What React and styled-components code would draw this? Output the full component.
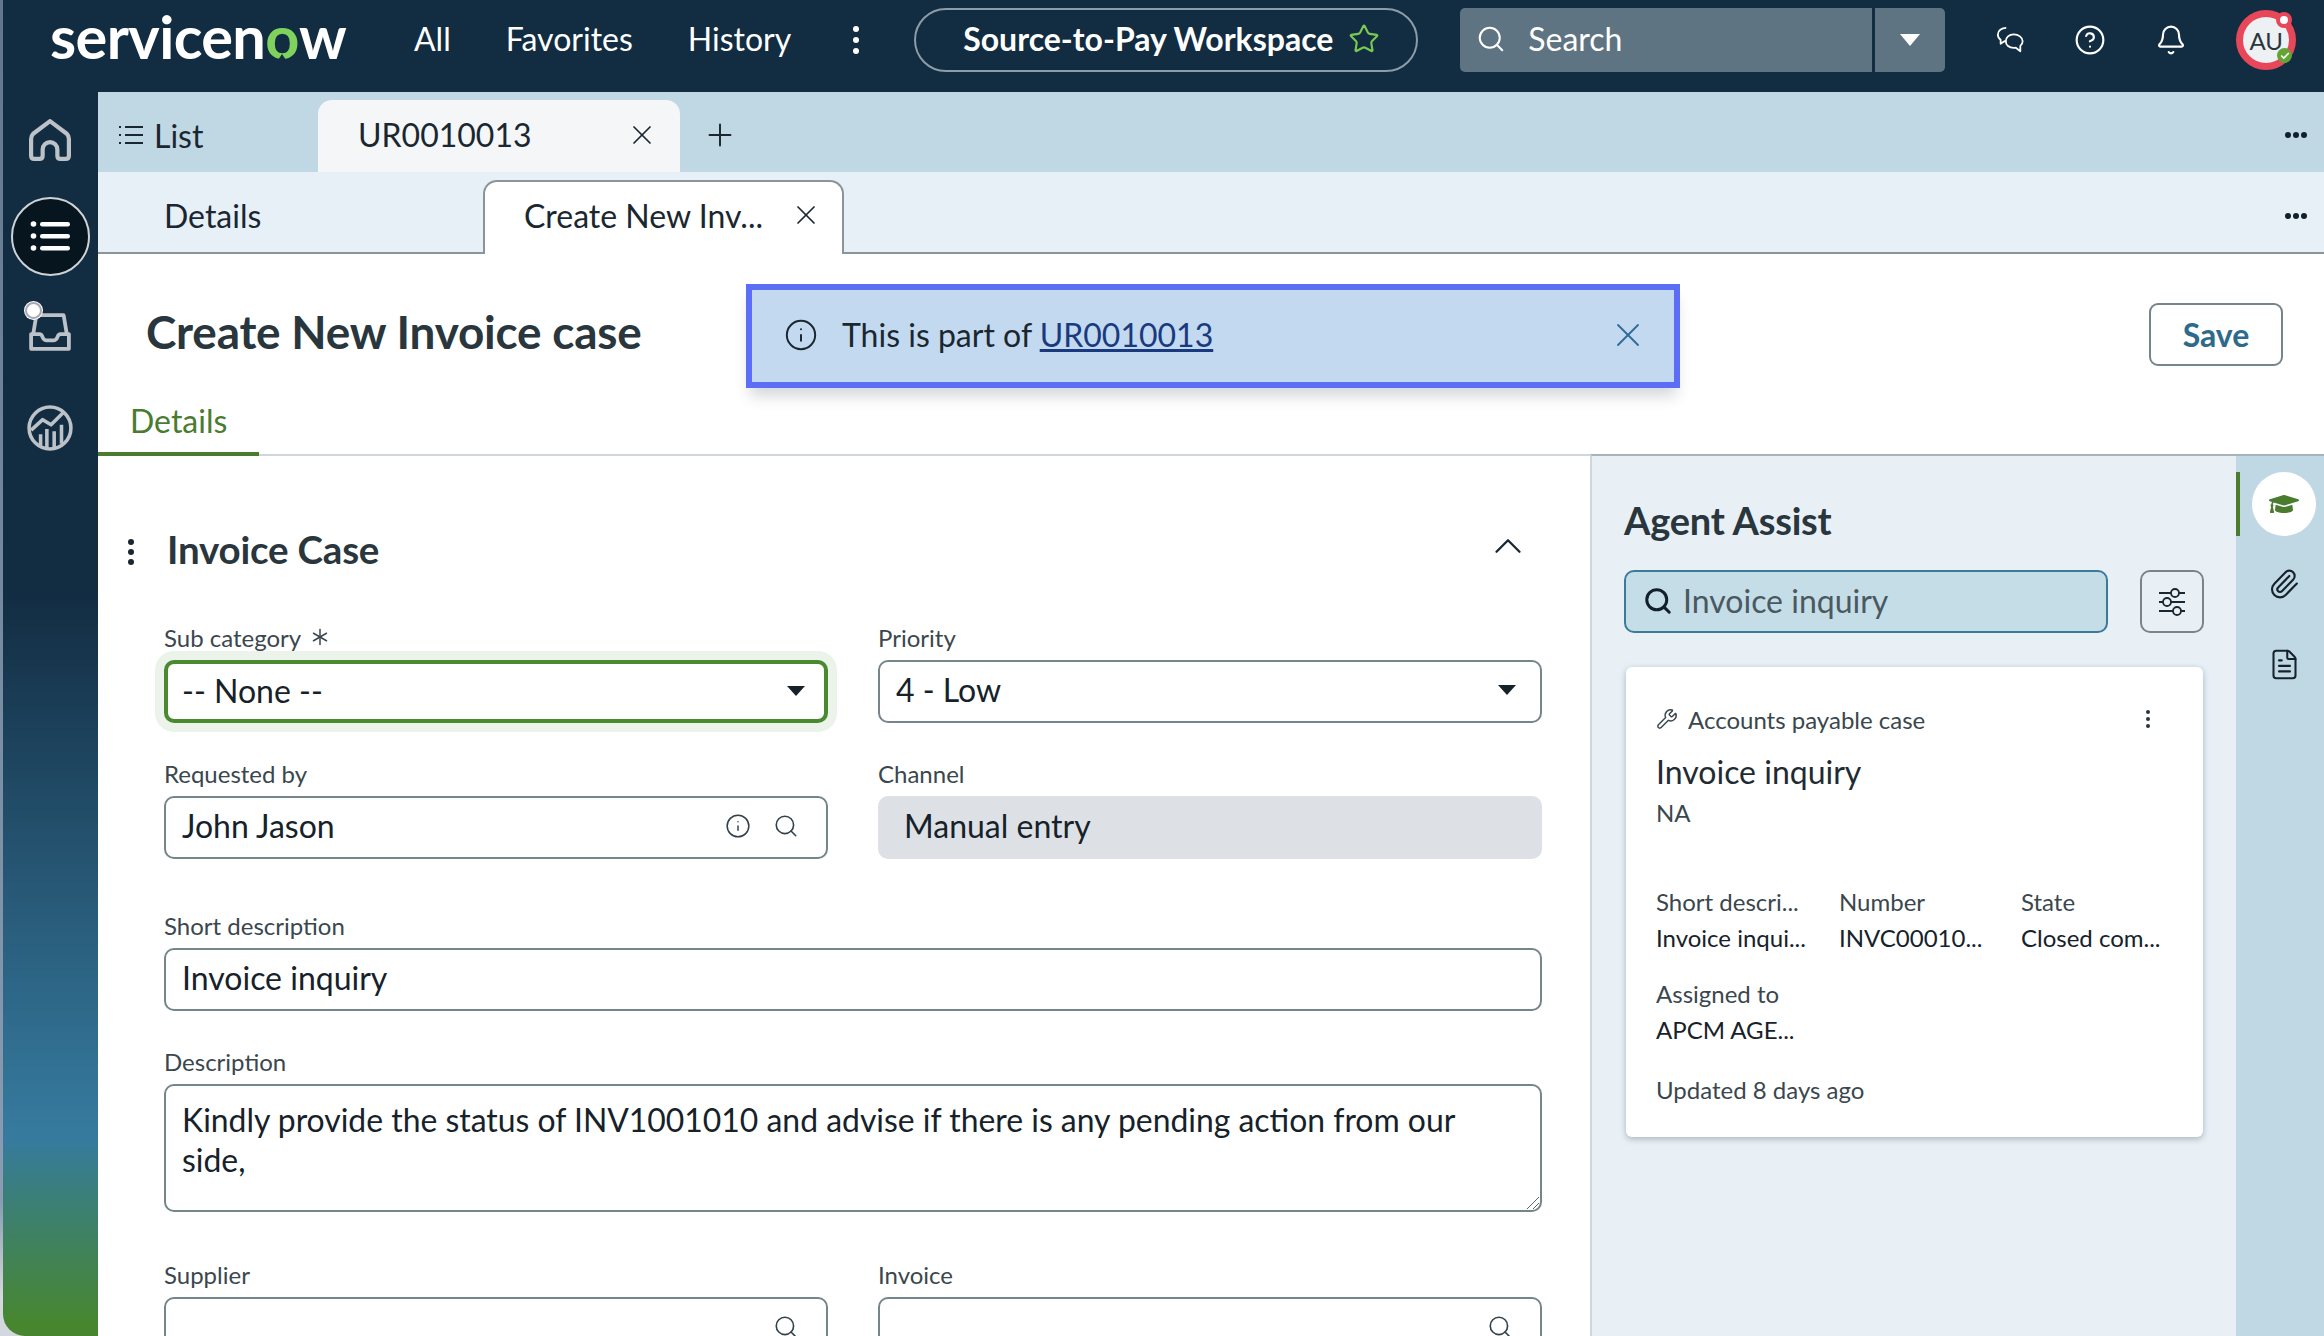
import React from "react";
import styled, { createGlobalStyle } from "styled-components";
import { Asterisk, Bell, ChevronUp, CircleHelp, FileText, Info, Paperclip, Search, Star, Wrench, X, Plus, Check } from "lucide-react";
import { FaGraduationCap } from "react-icons/fa";

const GlobalStyle = createGlobalStyle`
  html, body {
    margin: 0;
    padding: 0;
    width: 2324px;
    height: 1336px;
    overflow: hidden;
    font-family: "Lato", "Liberation Sans", sans-serif;
    color: #1b2730;
  }
  * { box-sizing: border-box; }
`;

const Page = styled.div`
  width: 2324px;
  height: 1336px;
  padding-left: 3px;
  display: flex;
  flex-direction: column;
  overflow: hidden;
  background: linear-gradient(#62778c, #8a9db2 90%, #d3d8de 97%);
`;

const TopBar = styled.header`
  height: 92px;
  flex: none;
  display: flex;
  align-items: flex-start;
  padding: 8px 0 0 47px;
  background: #122c42;
  color: #fff;
`;

const Logo = styled.div`
  width: 296px;
  height: 64px;
  font-size: 59.5px;
  font-weight: 700;
  line-height: 60px;
  letter-spacing: -0.6px;
  margin-top: -2px;
  white-space: nowrap;
  span {
    position: relative;
    color: #7fd35c;
  }
  span::after {
    content: "";
    position: absolute;
    left: 50%;
    bottom: 9px;
    width: 0;
    height: 0;
    margin-left: -6px;
    border-left: 6px solid transparent;
    border-right: 6px solid transparent;
    border-bottom: 9px solid #122c42;
  }
`;

const Nav = styled.nav`
  display: flex;
  gap: 55px;
  margin-left: 68px;
  height: 64px;
  padding-bottom: 3px;
  align-items: center;
  font-size: 32px;
`;

const KebabTop = styled.div`
  display: flex;
  flex-direction: column;
  gap: ${(p) => p.$gap || 5}px;
  margin-left: ${(p) => p.$left || 0}px;
  i {
    display: block;
    width: ${(p) => p.$dot || 6}px;
    height: ${(p) => p.$dot || 6}px;
    border-radius: 50%;
    background: ${(p) => p.$color || "#fff"};
  }
`;

const KebabSlot = styled.div`
  height: 64px;
  display: flex;
  align-items: center;
`;

const WorkspacePill = styled.div`
  width: 504px;
  height: 64px;
  margin-left: 55px;
  padding: 0 0 3px 47px;
  display: flex;
  align-items: center;
  gap: 15px;
  border: 2px solid #8d9ca6;
  border-radius: 32px;
  font-size: 32px;
  font-weight: 700;
`;

const SearchBox = styled.div`
  width: 485px;
  height: 64px;
  margin-left: 42px;
  display: flex;
  align-items: center;
  background: #5f7482;
  border-radius: 5px;
  font-size: 32px;
  color: #fff;
`;

const SearchLeft = styled.div`
  width: 415px;
  height: 100%;
  padding: 0 0 3px 16px;
  display: flex;
  align-items: center;
  gap: 22px;
  border-right: 3px solid #122c42;
`;

const SearchCaret = styled.div`
  flex: 1;
  display: flex;
  justify-content: center;
`;

const Caret = styled.i`
  display: block;
  width: 0;
  height: 0;
  margin-right: ${(p) => p.$right || 0}px;
  border-left: ${(p) => p.$size || 10}px solid transparent;
  border-right: ${(p) => p.$size || 10}px solid transparent;
  border-top: ${(p) => (p.$size || 10) * 1.2}px solid ${(p) => p.$color || "#fff"};
`;

const BarIcons = styled.div`
  height: 64px;
  margin-left: 50px;
  display: flex;
  align-items: center;
  gap: 49px;
`;

const Avatar = styled.div`
  position: relative;
  width: 60px;
  height: 60px;
  border-radius: 50%;
  border: 7px solid #e8475a;
  background: #eef1f4;
  color: #2a363d;
  font-size: 24px;
  display: flex;
  align-items: center;
  justify-content: center;
`;

const AvatarDot = styled.i`
  position: absolute;
  top: -5px;
  right: -3px;
  width: 16px;
  height: 16px;
  border-radius: 50%;
  background: #fff;
  border: 4px solid #e8475a;
`;

const AvatarOk = styled.i`
  position: absolute;
  right: -3px;
  bottom: 0;
  width: 15px;
  height: 15px;
  border-radius: 50%;
  background: #63a534;
  color: #fff;
  display: flex;
  align-items: center;
  justify-content: center;
`;

const Body = styled.div`
  flex: 1;
  min-height: 0;
  display: flex;
`;

const SideNav = styled.aside`
  width: 95px;
  flex: none;
  display: flex;
  flex-direction: column;
  align-items: center;
  border-bottom-left-radius: 22px;
  background: linear-gradient(#122c42 0, #122c42 40%, #285a78 65%, #367b9f 84%, #3c8070 90%, #47862f 99%);
`;

const SideItem = styled.div`
  position: relative;
  width: 94px;
  height: 96px;
  margin-left: -1px;
  display: flex;
  align-items: center;
  justify-content: center;
  color: #bcc2c8;
`;

const SideCircle = styled.div`
  width: 79px;
  height: 79px;
  border-radius: 50%;
  background: #07151f;
  border: 2px solid #cdd2d6;
  display: flex;
  align-items: center;
  justify-content: center;
`;

const InboxDot = styled.i`
  position: absolute;
  left: 22px;
  top: 18px;
  width: 17px;
  height: 17px;
  border-radius: 50%;
  background: #fff;
  border: 2px solid #a8a8b4;
  box-shadow: 0 0 0 1px #fff;
`;

const Main = styled.main`
  flex: 1;
  min-width: 0;
  display: flex;
  flex-direction: column;
  background: #fff;
`;

const TabStrip = styled.div`
  height: ${(p) => p.$height}px;
  flex: none;
  display: flex;
  align-items: flex-end;
  padding-right: 17px;
  background: ${(p) => p.$bg};
  border-bottom: ${(p) => (p.$line ? "2px solid #8a9599" : "0")};
  font-size: 32px;
`;

const ListTab = styled.div`
  width: 220px;
  height: 100%;
  padding: 6px 0 0 20px;
  display: flex;
  align-items: center;
  gap: 10px;
`;

const SessionTab = styled.div`
  width: 362px;
  height: 72px;
  padding: 0 22px 3px 40px;
  display: flex;
  align-items: center;
  justify-content: space-between;
  background: #f4f6f8;
  border-radius: 14px 14px 0 0;
`;

const AddTab = styled.div`
  height: 100%;
  margin-left: 22px;
  padding-top: 6px;
  display: flex;
  align-items: center;
`;

const Dots = styled.div`
  height: 100%;
  margin-left: auto;
  padding-top: ${(p) => p.$top || 6}px;
  display: flex;
  align-items: center;
  gap: 2px;
  i {
    display: block;
    width: 6px;
    height: 6px;
    border-radius: 50%;
    background: #10202c;
  }
`;

const PlainTab = styled.div`
  width: 385px;
  height: 100%;
  padding: 6px 0 0 66px;
  display: flex;
  align-items: center;
`;

const OpenTab = styled.div`
  width: 361px;
  height: 74px;
  margin-bottom: -2px;
  padding: 0 20px 6px 39px;
  display: flex;
  align-items: center;
  justify-content: space-between;
  background: #fff;
  border: 2px solid #8a9599;
  border-bottom: 0;
  border-radius: 14px 14px 0 0;
`;

const TitleRow = styled.div`
  height: 150px;
  flex: none;
  padding: 30px 41px 16px 48px;
  display: flex;
  align-items: center;
`;

const Title = styled.h1`
  width: 600px;
  margin: 0 0 10px;
  font-size: 45.9px;
  font-weight: 700;
  color: #29363d;
  letter-spacing: -0.2px;
  white-space: nowrap;
`;

const Alert = styled.div`
  width: 934px;
  height: 104px;
  padding: 0 26px 3px 32px;
  display: flex;
  align-items: center;
  gap: 24px;
  background: #c2d9ef;
  border: 6px solid #5b6ef5;
  box-shadow: 0 12px 14px -4px rgba(40, 50, 60, 0.2);
  font-size: 32px;
  a {
    color: #1a3a80;
    text-decoration: underline;
  }
`;

const AlertClose = styled.div`
  margin-left: auto;
  display: flex;
  color: #2e6a9a;
`;

const SaveButton = styled.button`
  width: 134px;
  height: 63px;
  margin: 0 0 4px auto;
  background: #fff;
  border: 2px solid #76858a;
  border-radius: 9px;
  font-family: inherit;
  font-size: 32px;
  font-weight: 700;
  color: #2e6a8a;
`;

const FormTabs = styled.div`
  height: 52px;
  flex: none;
  border-bottom: 2px solid #d0d6da;
`;

const FormTab = styled.div`
  width: 161px;
  height: 52px;
  padding-left: 32px;
  border-bottom: 4px solid #4a7c2f;
  font-size: 32px;
  line-height: 34px;
  color: #4a7c2f;
`;

const Content = styled.div`
  flex: 1;
  min-height: 0;
  display: flex;
`;

const FormPane = styled.section`
  flex: 1;
  min-width: 0;
  padding: 72px 50px 0 66px;
  overflow: hidden;
`;

const SectionHead = styled.div`
  height: 48px;
  margin: 0 0 54px -36px;
  padding-right: 9px;
  display: flex;
  align-items: center;
  gap: 33px;
  h2 {
    margin: 0 0 6px;
    font-size: 38.5px;
    font-weight: 700;
    color: #29363d;
    letter-spacing: -0.2px;
  }
  svg {
    margin: 0 0 12px auto;
    color: #1b2730;
  }
`;

const FieldGrid = styled.div`
  display: grid;
  grid-template-columns: 664px 664px;
  column-gap: 50px;
  row-gap: 43px;
  margin-top: ${(p) => p.$top || 0}px;
`;

const Field = styled.div`
  grid-column: ${(p) => (p.$wide ? "1 / -1" : "auto")};
`;

const Label = styled.label`
  display: flex;
  align-items: center;
  gap: 4px;
  height: 30px;
  padding-bottom: 16px;
  font-size: 24px;
  color: #3a474e;
`;

const Box = styled.div`
  position: relative;
  height: ${(p) => p.$height || 63}px;
  padding: 0 16px ${(p) => (p.$focus ? 2 : 4)}px;
  display: flex;
  align-items: center;
  font-size: 32px;
  color: #16222a;
  background: ${(p) => (p.$readonly ? "#dde1e5" : "#fff")};
  border: ${(p) => (p.$focus ? "4px solid #4a8a2f" : p.$readonly ? "0" : "2px solid #76858a")};
  border-radius: 10px;
  box-shadow: ${(p) => (p.$focus ? "0 0 0 9px #ecf3ea" : "none")};
  ${(p) => p.$readonly && "padding-left: 26px;"}
  ${(p) => p.$area && "align-items: flex-start; padding-top: 14px; font-size: 31.9px; line-height: 40px;"}
`;

const BoxText = styled.span`
  flex: 1;
  margin-left: ${(p) => (p.$focus ? "-2px" : "0")};
`;

const BoxIcons = styled.span`
  display: flex;
  gap: 22px;
  margin-right: 11px;
  color: #33424a;
`;

const Grip = styled.svg`
  position: absolute;
  right: 0;
  bottom: 0;
`;

const AssistPane = styled.aside`
  width: 646px;
  flex: none;
  position: relative;
  margin-top: -2px;
  padding: 42px 32px 0 32px;
  background: #e8f0f6;
  border-top: 2px solid #a9b4b9;
  border-left: 2px solid #d0d6da;
  h2 {
    margin: 0;
    height: 44px;
    font-size: 38px;
    line-height: 44px;
    font-weight: 700;
    color: #29363d;
    letter-spacing: -0.2px;
  }
`;

const AssistSearchRow = styled.div`
  display: flex;
  gap: 32px;
  margin-top: 28px;
`;

const AssistSearch = styled.div`
  width: 484px;
  height: 63px;
  padding: 0 0 2px 17px;
  display: flex;
  align-items: center;
  gap: 10px;
  background: #c5dde7;
  border: 2px solid #3b7a9b;
  border-radius: 10px;
  font-size: 32px;
  color: #4a5960;
`;

const FilterButton = styled.div`
  width: 64px;
  height: 63px;
  display: flex;
  align-items: center;
  justify-content: center;
  border: 2px solid #7a8589;
  border-radius: 10px;
`;

const Card = styled.article`
  width: 577px;
  height: 470px;
  margin: 34px 0 0 2px;
  padding: 37px 30px 0 30px;
  background: #fff;
  border-radius: 6px;
  box-shadow: 0 2px 6px rgba(50, 70, 85, 0.35);
`;

const CardHead = styled.div`
  height: 30px;
  display: flex;
  align-items: center;
  gap: 10px;
  font-size: 24px;
  color: #3a474e;
`;

const CardKebab = styled.div`
  margin: 0 23px 0 auto;
`;

const CardTitle = styled.div`
  height: 36px;
  margin-top: 20px;
  font-size: 32px;
  line-height: 36px;
  color: #1f2b33;
`;

const CardSub = styled.div`
  margin-top: ${(p) => p.$top || 8}px;
  height: 30px;
  font-size: 24px;
  line-height: 30px;
  color: #3a474e;
`;

const InfoGrid = styled.dl`
  display: grid;
  grid-template-columns: 183px 182px 1fr;
  row-gap: 26px;
  margin: 59px 0 0;
`;

const InfoItem = styled.div`
  dt {
    height: 30px;
    font-size: 24px;
    line-height: 30px;
    color: #3a474e;
    white-space: nowrap;
  }
  dd {
    height: 30px;
    margin: 6px 0 0;
    font-size: 24px;
    line-height: 30px;
    color: #16222a;
    white-space: nowrap;
  }
`;

const Rail = styled.nav`
  width: 88px;
  flex: none;
  position: relative;
  margin-top: -2px;
  padding: 16px 0 0 8px;
  display: flex;
  flex-direction: column;
  align-items: center;
  gap: 16px;
  background: #c0d8e4;
  border-top: 2px solid #a9b4b9;
`;

const RailItem = styled.div`
  width: 64px;
  height: 64px;
  display: flex;
  align-items: center;
  justify-content: center;
  border-radius: 50%;
  color: ${(p) => (p.$active ? "#4a7c2f" : "#16222a")};
  background: ${(p) => (p.$active ? "#fff" : "transparent")};
  &::before {
    content: "";
    display: ${(p) => (p.$active ? "block" : "none")};
    position: absolute;
    left: 0;
    top: 16px;
    width: 4px;
    height: 64px;
    background: #4a7c2f;
  }
`;

const Kebab = ({ color, dot, gap, left }) => (
  <KebabTop $color={color} $dot={dot} $gap={gap} $left={left}>
    <i />
    <i />
    <i />
  </KebabTop>
);

const ChatIcon = () => (
  <svg width="30" height="30" viewBox="0 0 32 32" fill="none" stroke="#fff" strokeWidth="1.9" strokeLinejoin="round">
    <path d="M12 3c-5 0-9 3-9 7.2 0 2.3 1.2 4.3 3 5.6V20l4-2.7c.7.1 1.3.2 2 .2" />
    <path d="M20 10c-5 0-8.500 3.200-8.500 7.300s3.500 7.200 8.500 7.200c.8 0 1.500-.1 2.200-.3L27 28v-5.700c1.600-1.200 2.500-3 2.500-5 0-4.100-4.500-7.300-9.500-7.300z" />
  </svg>
);

const HomeIcon = () => (
  <svg width="42" height="42" viewBox="0 0 40 40" fill="none" stroke="currentColor" strokeWidth="4" strokeLinejoin="round">
    <path d="M20 2L36 14Q38 16 38 19V35Q38 38 35 38H30Q27 38 27 35V29A7 7 0 0 0 13 29V35Q13 38 10 38H5Q2 38 2 35V19Q2 16 4 14Z" />
  </svg>
);

const ListIcon = () => (
  <svg width="40" height="30" viewBox="0 0 40 30" fill="#fff">
    <circle cx="3.500" cy="3" r="2.800" />
    <circle cx="3.500" cy="15" r="2.800" />
    <circle cx="3.500" cy="27" r="2.800" />
    <rect x="10" y="1" width="30" height="4.400" rx="2.200" />
    <rect x="10" y="13" width="30" height="4.400" rx="2.200" />
    <rect x="10" y="25" width="30" height="4.400" rx="2.200" />
  </svg>
);

const InboxIcon = () => (
  <svg width="42" height="38" viewBox="0 0 40 36" fill="none" stroke="currentColor" strokeWidth="3.600" strokeLinejoin="round">
    <path d="M2 20H10Q12 20 13 23Q14 26 17 26H23Q26 26 27 23Q28 20 30 20H38V34H2Z" />
    <path d="M4 20L7 2H33L36 20" />
  </svg>
);

const AnalyticsIcon = () => (
  <svg width="46" height="46" viewBox="0 0 44 44" fill="none" stroke="currentColor" strokeWidth="3.400" strokeLinejoin="round">
    <circle cx="22" cy="22" r="20" />
    <path d="M4 24L15 14L23 19L35 7" />
    <path d="M13 39V28M19 41V23M26 41V25M33 37V19" />
  </svg>
);

const MenuLines = () => (
  <svg width="26" height="22" viewBox="0 0 26 22" stroke="#1b2730" strokeWidth="2">
    <path d="M7 3H25M7 11H25M7 19H25" />
    <path d="M1 3H3M1 11H3M1 19H3" strokeDasharray="2 1" />
  </svg>
);

const Sliders = () => (
  <svg width="28" height="30" viewBox="0 0 28 30" fill="none" stroke="#1b2730" strokeWidth="1.800">
    <path d="M1 6H13M21 6H27M1 15H5M13 15H27M1 24H15M23 24H27" />
    <circle cx="17" cy="6" r="4" />
    <circle cx="9" cy="15" r="4" />
    <circle cx="19" cy="24" r="4" />
  </svg>
);

const App = () => {
  return (
    <>
      <GlobalStyle />
      <Page>
        <TopBar>
          <Logo>
            servicen<span>o</span>w
          </Logo>
          <Nav>
            <span>All</span>
            <span>Favorites</span>
            <span>History</span>
          </Nav>
          <KebabSlot>
            <Kebab left={62} />
          </KebabSlot>
          <WorkspacePill>
            Source-to-Pay Workspace
            <Star size={32} color="#7bc950" strokeWidth={1.6} />
          </WorkspacePill>
          <SearchBox>
            <SearchLeft>
              <Search size={30} strokeWidth={1.6} />
              Search
            </SearchLeft>
            <SearchCaret>
              <Caret />
            </SearchCaret>
          </SearchBox>
          <BarIcons>
            <ChatIcon />
            <CircleHelp size={32} strokeWidth={1.6} />
            <Bell size={32} strokeWidth={1.6} />
            <Avatar>
              AU
              <AvatarDot />
              <AvatarOk>
                <Check size={10} strokeWidth={4} />
              </AvatarOk>
            </Avatar>
          </BarIcons>
        </TopBar>

        <Body>
          <SideNav>
            <SideItem>
              <HomeIcon />
            </SideItem>
            <SideItem>
              <SideCircle>
                <ListIcon />
              </SideCircle>
            </SideItem>
            <SideItem>
              <InboxIcon />
              <InboxDot />
            </SideItem>
            <SideItem>
              <AnalyticsIcon />
            </SideItem>
          </SideNav>

          <Main>
            <TabStrip $height={80} $bg="#c0d8e4">
              <ListTab>
                <MenuLines />
                List
              </ListTab>
              <SessionTab>
                UR0010013
                <X size={32} strokeWidth={1.3} />
              </SessionTab>
              <AddTab>
                <Plus size={36} strokeWidth={1.3} />
              </AddTab>
              <Dots>
                <i />
                <i />
                <i />
              </Dots>
            </TabStrip>
            <TabStrip $height={82} $bg="#e8f0f7" $line>
              <PlainTab>Details</PlainTab>
              <OpenTab>
                Create New Inv...
                <X size={32} strokeWidth={1.3} />
              </OpenTab>
              <Dots $top={8}>
                <i />
                <i />
                <i />
              </Dots>
            </TabStrip>

            <TitleRow>
              <Title>Create New Invoice case</Title>
              <Alert>
                <Info size={34} strokeWidth={1.4} />
                <span>
                  This is part of <a href="#ur">UR0010013</a>
                </span>
                <AlertClose>
                  <X size={40} strokeWidth={1.1} />
                </AlertClose>
              </Alert>
              <SaveButton>Save</SaveButton>
            </TitleRow>

            <FormTabs>
              <FormTab>Details</FormTab>
            </FormTabs>

            <Content>
              <FormPane>
                <SectionHead>
                  <Kebab color="#1b2730" dot={6} gap={4} />
                  <h2>Invoice Case</h2>
                  <ChevronUp size={46} strokeWidth={1.2} />
                </SectionHead>

                <FieldGrid>
                  <Field>
                    <Label>
                      Sub category <Asterisk size={30} strokeWidth={1.2} />
                    </Label>
                    <Box $focus>
                      <BoxText $focus>-- None --</BoxText>
                      <Caret $size={9} $color="#16222a" $right={3} />
                    </Box>
                  </Field>
                  <Field>
                    <Label>Priority</Label>
                    <Box>
                      <BoxText>4 - Low</BoxText>
                      <Caret $size={9} $color="#16222a" $right={8} />
                    </Box>
                  </Field>
                  <Field>
                    <Label>Requested by</Label>
                    <Box>
                      <BoxText>John Jason</BoxText>
                      <BoxIcons>
                        <Info size={26} strokeWidth={1.4} />
                        <Search size={26} strokeWidth={1.5} />
                      </BoxIcons>
                    </Box>
                  </Field>
                  <Field>
                    <Label>Channel</Label>
                    <Box $readonly>
                      <BoxText>Manual entry</BoxText>
                    </Box>
                  </Field>
                </FieldGrid>

                <FieldGrid $top={59}>
                  <Field $wide>
                    <Label>Short description</Label>
                    <Box>
                      <BoxText>Invoice inquiry</BoxText>
                    </Box>
                  </Field>
                  <Field $wide>
                    <Label>Description</Label>
                    <Box $area $height={128}>
                      <BoxText>
                        Kindly provide the status of INV1001010 and advise if there is any pending action from our
                        side,
                      </BoxText>
                      <Grip width="16" height="16" viewBox="0 0 16 16" stroke="#5a666c" strokeWidth="1">
                        <path d="M3 15L15 3M9 15L15 9" />
                      </Grip>
                    </Box>
                  </Field>
                </FieldGrid>

                <FieldGrid $top={55}>
                  <Field>
                    <Label>Supplier</Label>
                    <Box>
                      <BoxText />
                      <BoxIcons>
                        <Search size={26} strokeWidth={1.5} />
                      </BoxIcons>
                    </Box>
                  </Field>
                  <Field>
                    <Label>Invoice</Label>
                    <Box>
                      <BoxText />
                      <BoxIcons>
                        <Search size={26} strokeWidth={1.5} />
                      </BoxIcons>
                    </Box>
                  </Field>
                </FieldGrid>
              </FormPane>

              <AssistPane>
                <h2>Agent Assist</h2>
                <AssistSearchRow>
                  <AssistSearch>
                    <Search size={30} strokeWidth={2.4} color="#10202c" />
                    Invoice inquiry
                  </AssistSearch>
                  <FilterButton>
                    <Sliders />
                  </FilterButton>
                </AssistSearchRow>
                <Card>
                  <CardHead>
                    <Wrench size={22} strokeWidth={1.6} />
                    Accounts payable case
                    <CardKebab>
                      <Kebab color="#2a363d" dot={4} gap={3} />
                    </CardKebab>
                  </CardHead>
                  <CardTitle>Invoice inquiry</CardTitle>
                  <CardSub>NA</CardSub>
                  <InfoGrid>
                    <InfoItem>
                      <dt>Short descri...</dt>
                      <dd>Invoice inqui...</dd>
                    </InfoItem>
                    <InfoItem>
                      <dt>Number</dt>
                      <dd>INVC00010...</dd>
                    </InfoItem>
                    <InfoItem>
                      <dt>State</dt>
                      <dd>Closed com...</dd>
                    </InfoItem>
                    <InfoItem>
                      <dt>Assigned to</dt>
                      <dd>APCM AGE...</dd>
                    </InfoItem>
                  </InfoGrid>
                  <CardSub $top={30}>Updated 8 days ago</CardSub>
                </Card>
              </AssistPane>

              <Rail>
                <RailItem $active>
                  <FaGraduationCap size={30} />
                </RailItem>
                <RailItem>
                  <Paperclip size={32} strokeWidth={1.6} />
                </RailItem>
                <RailItem>
                  <FileText size={33} strokeWidth={1.5} />
                </RailItem>
              </Rail>
            </Content>
          </Main>
        </Body>
      </Page>
    </>
  );
};

export default App;
